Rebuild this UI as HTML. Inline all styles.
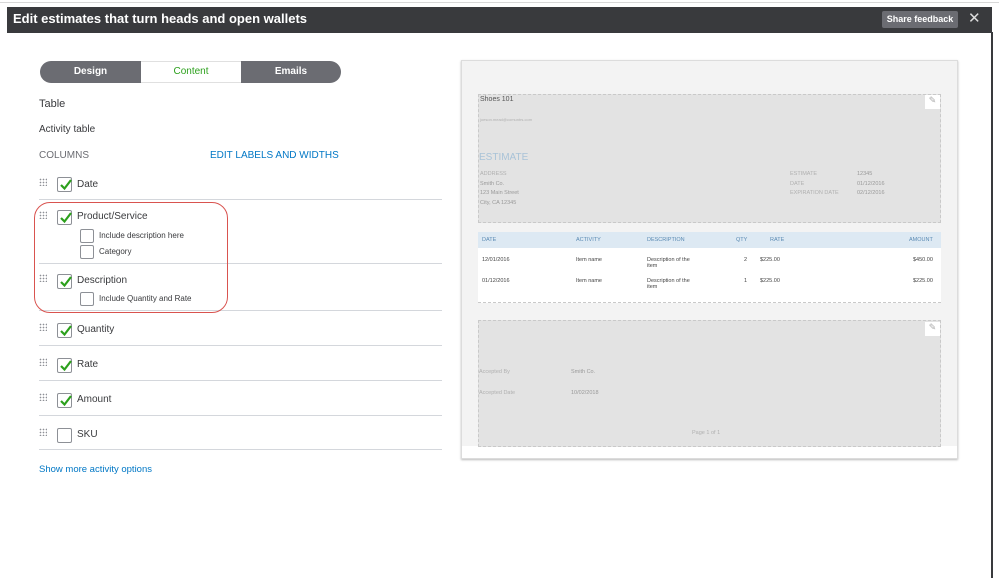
<!DOCTYPE html>
<html><head><style>
*{margin:0;padding:0;box-sizing:border-box}
body{width:999px;height:578px;background:#fff;position:relative;overflow:hidden;font-family:"Liberation Sans",sans-serif;color:#393a3d}
.a{position:absolute;white-space:nowrap}
.cb{position:absolute;width:15px;height:15px;border:1px solid #8d9096;border-radius:2px;background:#fff}
.cb svg{position:absolute;left:1px;top:0}
.g{position:absolute;width:8px;height:8px;background-image:radial-gradient(circle,#8d9096 0.7px,transparent 0.9px);background-size:3px 3px}
.ln{position:absolute;left:39px;width:403px;height:1px;background:#d4d7dc}
.t{font-size:10px;color:#393a3d}
.s{font-size:5.5px;color:#444}
.l{font-size:5.5px;color:#b0b0b0}
</style></head><body>
<div class="a" style="left:0;top:2px;width:999px;height:1px;background:#d8d8d8"></div>
<div class="a" style="left:7px;top:7px;width:985px;height:26px;background:#393a3d"></div>
<div class="a" style="left:13px;top:11px;font-size:13px;font-weight:bold;color:#fff">Edit estimates that turn heads and open wallets</div>
<div class="a" style="left:882px;top:11px;width:76px;height:17px;background:#6b6c72;border-radius:2px;color:#fff;font-size:9px;font-weight:bold;text-align:center;line-height:17px">Share feedback</div>
<div class="a" style="left:968px;top:9px;color:#ddd;font-size:15px">✕</div>
<div class="a" style="left:991px;top:32px;width:2px;height:546px;background:#393a3d"></div>

<div class="a" style="left:40px;top:61px;width:301px;height:22px;border-radius:11px;background:#6b6c72;overflow:hidden">
<div class="a" style="left:101px;top:0;width:100px;height:22px;background:#fff;border-top:1px solid #e0e0e0;border-bottom:1px solid #e0e0e0"></div>
<div class="a" style="left:0;width:101px;top:5px;text-align:center;color:#fff;font-size:10px;font-weight:bold">Design</div>
<div class="a" style="left:101px;width:100px;top:5px;text-align:center;color:#2ca01c;font-size:10px">Content</div>
<div class="a" style="left:201px;width:100px;top:5px;text-align:center;color:#fff;font-size:10px;font-weight:bold">Emails</div>
</div>

<div class="a" style="left:39px;top:98px;font-size:11px">Table</div>
<div class="a" style="left:39px;top:124px;font-size:10px">Activity table</div>
<div class="a" style="left:39px;top:150px;font-size:10px;color:#6b6c72">COLUMNS</div>
<div class="a" style="left:210px;top:150px;font-size:10px;color:#0077c5">EDIT LABELS AND WIDTHS</div>

<div class="ln" style="top:199px"></div><div class="ln" style="top:263px"></div><div class="ln" style="top:310px"></div><div class="ln" style="top:345px"></div><div class="ln" style="top:380px"></div><div class="ln" style="top:415px"></div><div class="ln" style="top:449px"></div>

<div class="a" style="left:34px;top:202px;width:194px;height:111px;border:1px solid #d9534f;border-radius:16px"></div>

<div class="g" style="left:39px;top:178px"></div>
<div class="cb" style="left:57px;top:177px"><svg width="13" height="13" viewBox="0 0 13 13"><path d="M2 7l3.5 3.5L12 2" stroke="#2ca01c" stroke-width="2.2" fill="none"/></svg></div>
<div class="a t" style="left:77px;top:179px">Date</div>

<div class="g" style="left:39px;top:211px"></div>
<div class="cb" style="left:57px;top:210px"><svg width="13" height="13" viewBox="0 0 13 13"><path d="M2 7l3.5 3.5L12 2" stroke="#2ca01c" stroke-width="2.2" fill="none"/></svg></div>
<div class="a t" style="left:77px;top:211px">Product/Service</div>
<div class="cb" style="left:80px;top:229px;width:14px;height:14px"></div>
<div class="a" style="left:99px;top:231px;font-size:8px">Include description here</div>
<div class="cb" style="left:80px;top:245px;width:14px;height:14px"></div>
<div class="a" style="left:99px;top:247px;font-size:8px">Category</div>

<div class="g" style="left:39px;top:274px"></div>
<div class="cb" style="left:57px;top:274px"><svg width="13" height="13" viewBox="0 0 13 13"><path d="M2 7l3.5 3.5L12 2" stroke="#2ca01c" stroke-width="2.2" fill="none"/></svg></div>
<div class="a t" style="left:77px;top:275px">Description</div>
<div class="cb" style="left:80px;top:292px;width:14px;height:14px"></div>
<div class="a" style="left:99px;top:294px;font-size:8px">Include Quantity and Rate</div>

<div class="g" style="left:39px;top:323px"></div>
<div class="cb" style="left:57px;top:323px"><svg width="13" height="13" viewBox="0 0 13 13"><path d="M2 7l3.5 3.5L12 2" stroke="#2ca01c" stroke-width="2.2" fill="none"/></svg></div>
<div class="a t" style="left:77px;top:324px">Quantity</div>
<div class="g" style="left:39px;top:358px"></div>
<div class="cb" style="left:57px;top:358px"><svg width="13" height="13" viewBox="0 0 13 13"><path d="M2 7l3.5 3.5L12 2" stroke="#2ca01c" stroke-width="2.2" fill="none"/></svg></div>
<div class="a t" style="left:77px;top:359px">Rate</div>
<div class="g" style="left:39px;top:393px"></div>
<div class="cb" style="left:57px;top:393px"><svg width="13" height="13" viewBox="0 0 13 13"><path d="M2 7l3.5 3.5L12 2" stroke="#2ca01c" stroke-width="2.2" fill="none"/></svg></div>
<div class="a t" style="left:77px;top:394px">Amount</div>
<div class="g" style="left:39px;top:428px"></div>
<div class="cb" style="left:57px;top:428px"></div>
<div class="a t" style="left:77px;top:429px">SKU</div>
<div class="a" style="left:39px;top:464px;font-size:9.5px;color:#0077c5">Show more activity options</div>

<!-- preview -->
<div class="a" style="left:461px;top:60px;width:497px;height:399px;background:#f3f3f3;border:1px solid #dcdcdc;box-shadow:0 1px 2px #bbb"></div>
<div class="a" style="left:462px;top:446px;width:495px;height:12px;background:#fff"></div>
<div class="a" style="left:478px;top:94px;width:463px;height:129px;background:#e3e3e3;border:1px dashed #c9c9c9"></div>
<div class="a" style="left:925px;top:95px;width:15px;height:14px;background:#fff;color:#aaa;font-size:9px;text-align:center">✎</div>
<div class="a" style="left:480px;top:96px;font-size:7px;color:#555">Shoes 101</div>
<div class="a l" style="left:480px;top:117px;font-size:4px">joeson.mead@comuntrs.com</div>
<div class="a" style="left:479px;top:152px;font-size:10px;color:#a9c3d8">ESTIMATE</div>
<div class="a l" style="left:480px;top:171px">ADDRESS</div>
<div class="a l" style="left:480px;top:181px;color:#999">Smith Co.</div>
<div class="a l" style="left:480px;top:190px;color:#999">123 Main Street</div>
<div class="a l" style="left:480px;top:200px;color:#999">City, CA 12345</div>
<div class="a l" style="left:790px;top:171px">ESTIMATE</div>
<div class="a l" style="left:790px;top:181px">DATE</div>
<div class="a l" style="left:790px;top:190px">EXPIRATION DATE</div>
<div class="a l" style="left:857px;top:171px;color:#999">12345</div>
<div class="a l" style="left:857px;top:181px;color:#999">01/12/2016</div>
<div class="a l" style="left:857px;top:190px;color:#999">02/12/2016</div>

<div class="a" style="left:478px;top:232px;width:463px;height:16px;background:#dde9f3"></div>
<div class="a" style="left:478px;top:248px;width:463px;height:55px;background:#fff;border-bottom:1px dashed #c9c9c9"></div>
<div class="a s" style="left:482px;top:237px;color:#5a8ab3">DATE</div>
<div class="a s" style="left:576px;top:237px;color:#5a8ab3">ACTIVITY</div>
<div class="a s" style="left:647px;top:237px;color:#5a8ab3">DESCRIPTION</div>
<div class="a s" style="left:736px;top:237px;color:#5a8ab3">QTY</div>
<div class="a s" style="left:770px;top:237px;color:#5a8ab3">RATE</div>
<div class="a s" style="left:909px;top:237px;color:#5a8ab3">AMOUNT</div>
<div class="a s" style="left:482px;top:257px">12/01/2016</div>
<div class="a s" style="left:576px;top:257px">Item name</div>
<div class="a s" style="left:647px;top:257px;line-height:6px">Description of the<br>item</div>
<div class="a s" style="left:744px;top:257px">2</div>
<div class="a s" style="left:760px;top:257px">$225.00</div>
<div class="a s" style="left:913px;top:257px">$450.00</div>
<div class="a s" style="left:482px;top:278px">01/12/2016</div>
<div class="a s" style="left:576px;top:278px">Item name</div>
<div class="a s" style="left:647px;top:278px;line-height:6px">Description of the<br>item</div>
<div class="a s" style="left:744px;top:278px">1</div>
<div class="a s" style="left:760px;top:278px">$225.00</div>
<div class="a s" style="left:913px;top:278px">$225.00</div>

<div class="a" style="left:478px;top:320px;width:463px;height:127px;background:#e3e3e3;border:1px dashed #c9c9c9"></div>
<div class="a" style="left:925px;top:322px;width:15px;height:14px;background:#fff;color:#aaa;font-size:9px;text-align:center">✎</div>
<div class="a l" style="left:479px;top:369px">Accepted By</div>
<div class="a l" style="left:571px;top:369px;color:#999">Smith Co.</div>
<div class="a l" style="left:479px;top:390px">Accepted Date</div>
<div class="a l" style="left:571px;top:390px;color:#999">10/02/2018</div>
<div class="a l" style="left:692px;top:430px">Page 1 of 1</div>
</body></html>
